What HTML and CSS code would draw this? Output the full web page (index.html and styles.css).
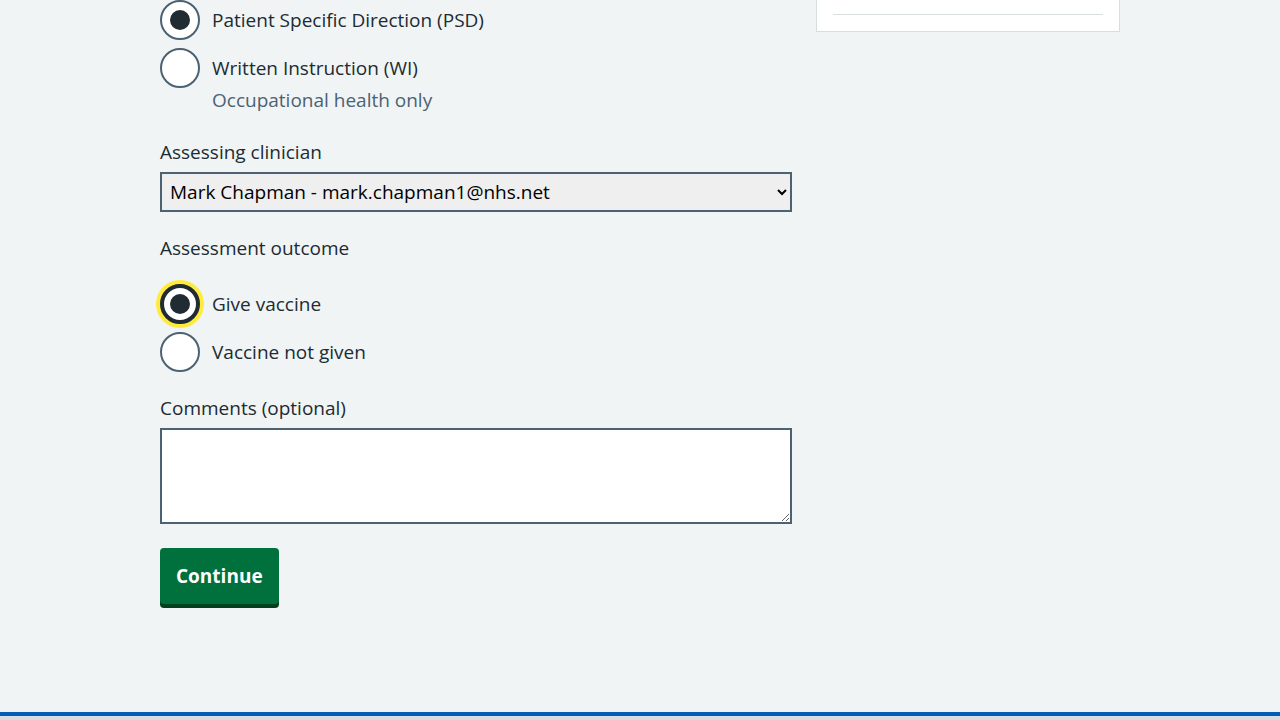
FILE: index.html
```html
<!DOCTYPE html>
<html lang="en">
<head>
<meta charset="utf-8">
<title>Assessment</title>
<link rel="stylesheet" href="styles.css">
</head>
<body>
<div class="page">
  <main class="container">
    <div class="main-col">
      <div class="form-group group-first">
        <div class="radios">
          <div class="radio-item">
            <span class="radio checked"></span>
            <div class="radio-text">
              <div class="radio-label">Patient Specific Direction (PSD)</div>
            </div>
          </div>
          <div class="radio-item">
            <span class="radio"></span>
            <div class="radio-text">
              <div class="radio-label">Written Instruction (WI)</div>
              <div class="hint">Occupational health only</div>
            </div>
          </div>
        </div>
      </div>

      <div class="form-group">
        <label class="label" for="clinician">Assessing clinician</label>
        <select class="select" id="clinician">
          <option>Mark Chapman - mark.chapman1@nhs.net</option>
        </select>
      </div>

      <div class="form-group">
        <div class="legend">Assessment outcome</div>
        <div class="radios">
          <div class="radio-item">
            <span class="radio checked focused"></span>
            <div class="radio-text">
              <div class="radio-label">Give vaccine</div>
            </div>
          </div>
          <div class="radio-item">
            <span class="radio"></span>
            <div class="radio-text">
              <div class="radio-label">Vaccine not given</div>
            </div>
          </div>
        </div>
      </div>

      <div class="form-group">
        <label class="label" for="comments">Comments (optional)</label>
        <textarea class="textarea" id="comments"></textarea>
      </div>

      <button class="button" type="button">Continue</button>
    </div>

    <aside class="side-col">
      <div class="card">
        <hr class="card-rule">
      </div>
    </aside>
  </main>
  <footer class="footer"></footer>
</div>
</body>
</html>
```

FILE: styles.css
```css
html, body {
  margin: 0;
  padding: 0;
}

body {
  background: #f0f4f5;
  color: #212b32;
  font-family: "Open Sans", "Noto Sans", sans-serif;
  font-size: 19px;
  line-height: 28px;
}

.page {
  display: flex;
  flex-direction: column;
  min-height: 720px;
}

.container {
  width: 960px;
  margin: 0 auto;
  display: flex;
  gap: 24px;
  padding-bottom: 108px;
  flex: 1 0 auto;
}

.main-col {
  width: 632px;
  flex: none;
}

.side-col {
  width: 304px;
  flex: none;
}

.card {
  background: #ffffff;
  border: 1px solid #d8dde0;
  border-top: none;
  padding: 14px 16px 16px;
}

.card-rule {
  margin: 0;
  border: 0;
  border-top: 1px solid #d8dde0;
}

.form-group {
  margin-bottom: 22px;
}

.group-first {
  margin-bottom: 24px;
}

.radios {
  display: flex;
  flex-direction: column;
  gap: 8px;
}

.radio-item {
  display: flex;
  gap: 12px;
  min-height: 40px;
}

.radio {
  box-sizing: border-box;
  width: 40px;
  height: 40px;
  flex: none;
  border: 2px solid #4c6272;
  border-radius: 50%;
  background: #ffffff;
  display: flex;
  align-items: center;
  justify-content: center;
}

.radio.checked::after {
  content: "";
  width: 20px;
  height: 20px;
  border-radius: 50%;
  background: #212b32;
}

.radio.focused {
  border: 4px solid #212b32;
  box-shadow: 0 0 0 4px #ffeb3b;
}

.radio-text {
  padding-top: 6px;
}

.radio-label {
  line-height: 28px;
}

.hint {
  color: #4c6272;
  margin-top: 4px;
}

.label,
.legend {
  display: block;
  line-height: 28px;
}

.label {
  margin-bottom: 6px;
}

.legend {
  margin-bottom: 22px;
}

.select {
  box-sizing: border-box;
  display: block;
  width: 632px;
  height: 40px;
  border: 2px solid #4c6272;
  border-radius: 0;
  background: #efefef;
  color: #000000;
  font-family: "Open Sans", "Noto Sans", sans-serif;
  font-size: 19px;
  padding: 0 4px 0 4px;
}

.textarea {
  box-sizing: border-box;
  display: block;
  width: 632px;
  height: 96px;
  border: 2px solid #4c6272;
  border-radius: 0;
  background: #ffffff;
  font-family: "Open Sans", "Noto Sans", sans-serif;
  font-size: 19px;
  margin: 0;
}

.button {
  margin-top: 2px;
  box-sizing: border-box;
  height: 56px;
  padding: 0 14px;
  background: #00703c;
  color: #ffffff;
  border: 2px solid transparent;
  border-radius: 4px;
  box-shadow: 0 4px 0 #00401e;
  font-family: "Open Sans", "Noto Sans", sans-serif;
  font-weight: 700;
  font-size: 19px;
  line-height: 28px;
  cursor: pointer;
}

.footer {
  border-top: 4px solid #005eb8;
  background: #d8dde0;
  height: 120px;
}
```
